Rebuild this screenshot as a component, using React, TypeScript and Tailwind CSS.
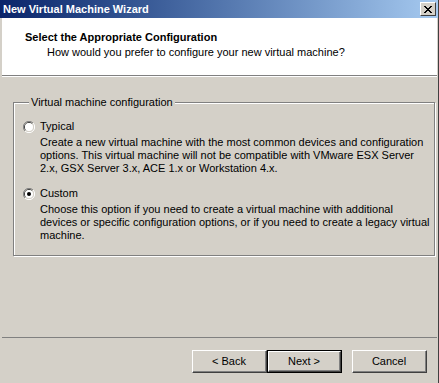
import React from 'react';

const font = { fontFamily: 'Tahoma, "Liberation Sans", Arial, sans-serif' };

// classic sunken radio button
const Radio = ({ checked }: { checked?: boolean }) => (
  <svg width="12" height="12" viewBox="0 0 12 12" className="shrink-0">
    <path d="M10 2 A5.5 5.5 0 0 0 2 10" stroke="#808080" strokeWidth="1" fill="none" />
    <path d="M9.2 2.8 A4.5 4.5 0 0 0 2.8 9.2" stroke="#404040" strokeWidth="1" fill="none" />
    <path d="M2 10 A5.5 5.5 0 0 0 10 2" stroke="#ffffff" strokeWidth="1" fill="none" />
    <path d="M2.8 9.2 A4.5 4.5 0 0 0 9.2 2.8" stroke="#d4d0c8" strokeWidth="1" fill="none" />
    <circle cx="6" cy="6" r="4" fill="#ffffff" />
    {checked && <circle cx="6" cy="6" r="2" fill="#000000" />}
  </svg>
);

const Button = ({ label, isDefault }: { label: string; isDefault?: boolean }) => (
  <div className={`w-[75px] h-[23px] ${isDefault ? 'border border-black' : ''}`}>
    <div className="w-full h-full border-t border-l border-white border-r border-b border-r-[#404040] border-b-[#404040]">
      <div className="w-full h-full flex items-center justify-center border-r border-b border-[#808080] text-[11px] text-black">
        {label}
      </div>
    </div>
  </div>
);

const options = [
  {
    id: 'typical',
    label: 'Typical',
    checked: false,
    lines: [
      'Create a new virtual machine with the most common devices and configuration',
      'options. This virtual machine will not be compatible with VMware ESX Server',
      '2.x, GSX Server 3.x, ACE 1.x or Workstation 4.x.',
    ],
  },
  {
    id: 'custom',
    label: 'Custom',
    checked: true,
    lines: [
      'Choose this option if you need to create a virtual machine with additional',
      'devices or specific configuration options, or if you need to create a legacy virtual',
      'machine.',
    ],
  },
];

export default function App() {
  return (
    <div style={font} className="w-[439px] h-[383px] bg-[#d4d0c8] flex flex-col overflow-hidden border-r border-r-[#404040] text-[11px] leading-[13px] text-black">
      {/* title bar */}
      <div className="h-[18px] flex items-center justify-between pl-[3px] pr-[2px] bg-gradient-to-r from-[#0a246a] to-[#a6caf0]">
        <span className="text-white font-bold text-[11px]">New Virtual Machine Wizard</span>
        <div className="w-[16px] h-[14px] bg-[#d4d0c8] border-t border-l border-white border-r border-b border-r-[#404040] border-b-[#404040] flex items-center justify-center">
          <svg width="8" height="7" viewBox="0 0 8 7">
            <path d="M0 0 L7 7 M1 0 L8 7 M7 0 L0 7 M8 0 L1 7" stroke="#000" strokeWidth="1" />
          </svg>
        </div>
      </div>

      {/* header */}
      <div className="ml-[2px] mr-[1px] h-[58px] bg-white border-b border-[#808080] shadow-[0_1px_0_#ffffff] flex flex-col">
        <div className="pl-[23px] pt-[13px] font-bold text-[11px] leading-[13px]">Select the Appropriate Configuration</div>
        <div className="pl-[45px] pt-[2px]">How would you prefer to configure your new virtual machine?</div>
      </div>

      {/* group box */}
      <fieldset className="ml-[13px] mr-[13px] mt-[20px] border border-[#808080] shadow-[inset_1px_1px_0_#ffffff,1px_1px_0_#ffffff] pl-[9px] pr-[4px] pb-[13px]">
        <legend className="ml-[6px] px-[2px] bg-[#d4d0c8] leading-[13px]">Virtual machine configuration</legend>
        <div className="flex flex-col gap-[12px] pt-[11px]">
          {options.map((o) => (
            <div key={o.id} className="flex flex-col gap-[3px]">
              <div className="flex items-center gap-[5px]">
                <Radio checked={o.checked} />
                <span>{o.label}</span>
              </div>
              <div className="pl-[17px] flex flex-col">
                {o.lines.map((l) => (
                  <span key={l} className="whitespace-nowrap">{l}</span>
                ))}
              </div>
            </div>
          ))}
        </div>
      </fieldset>

      <div className="flex-1" />

      {/* separator + buttons */}
      <div className="ml-[2px] mr-[1px] border-t border-[#808080] shadow-[inset_0_1px_0_#ffffff]" />
      <div className="flex justify-end pt-[12px] pb-[10px] pr-[11px]">
        <Button label="< Back" />
        <Button label="Next >" isDefault />
        <div className="w-[10px]" />
        <Button label="Cancel" />
      </div>
    </div>
  );
}
